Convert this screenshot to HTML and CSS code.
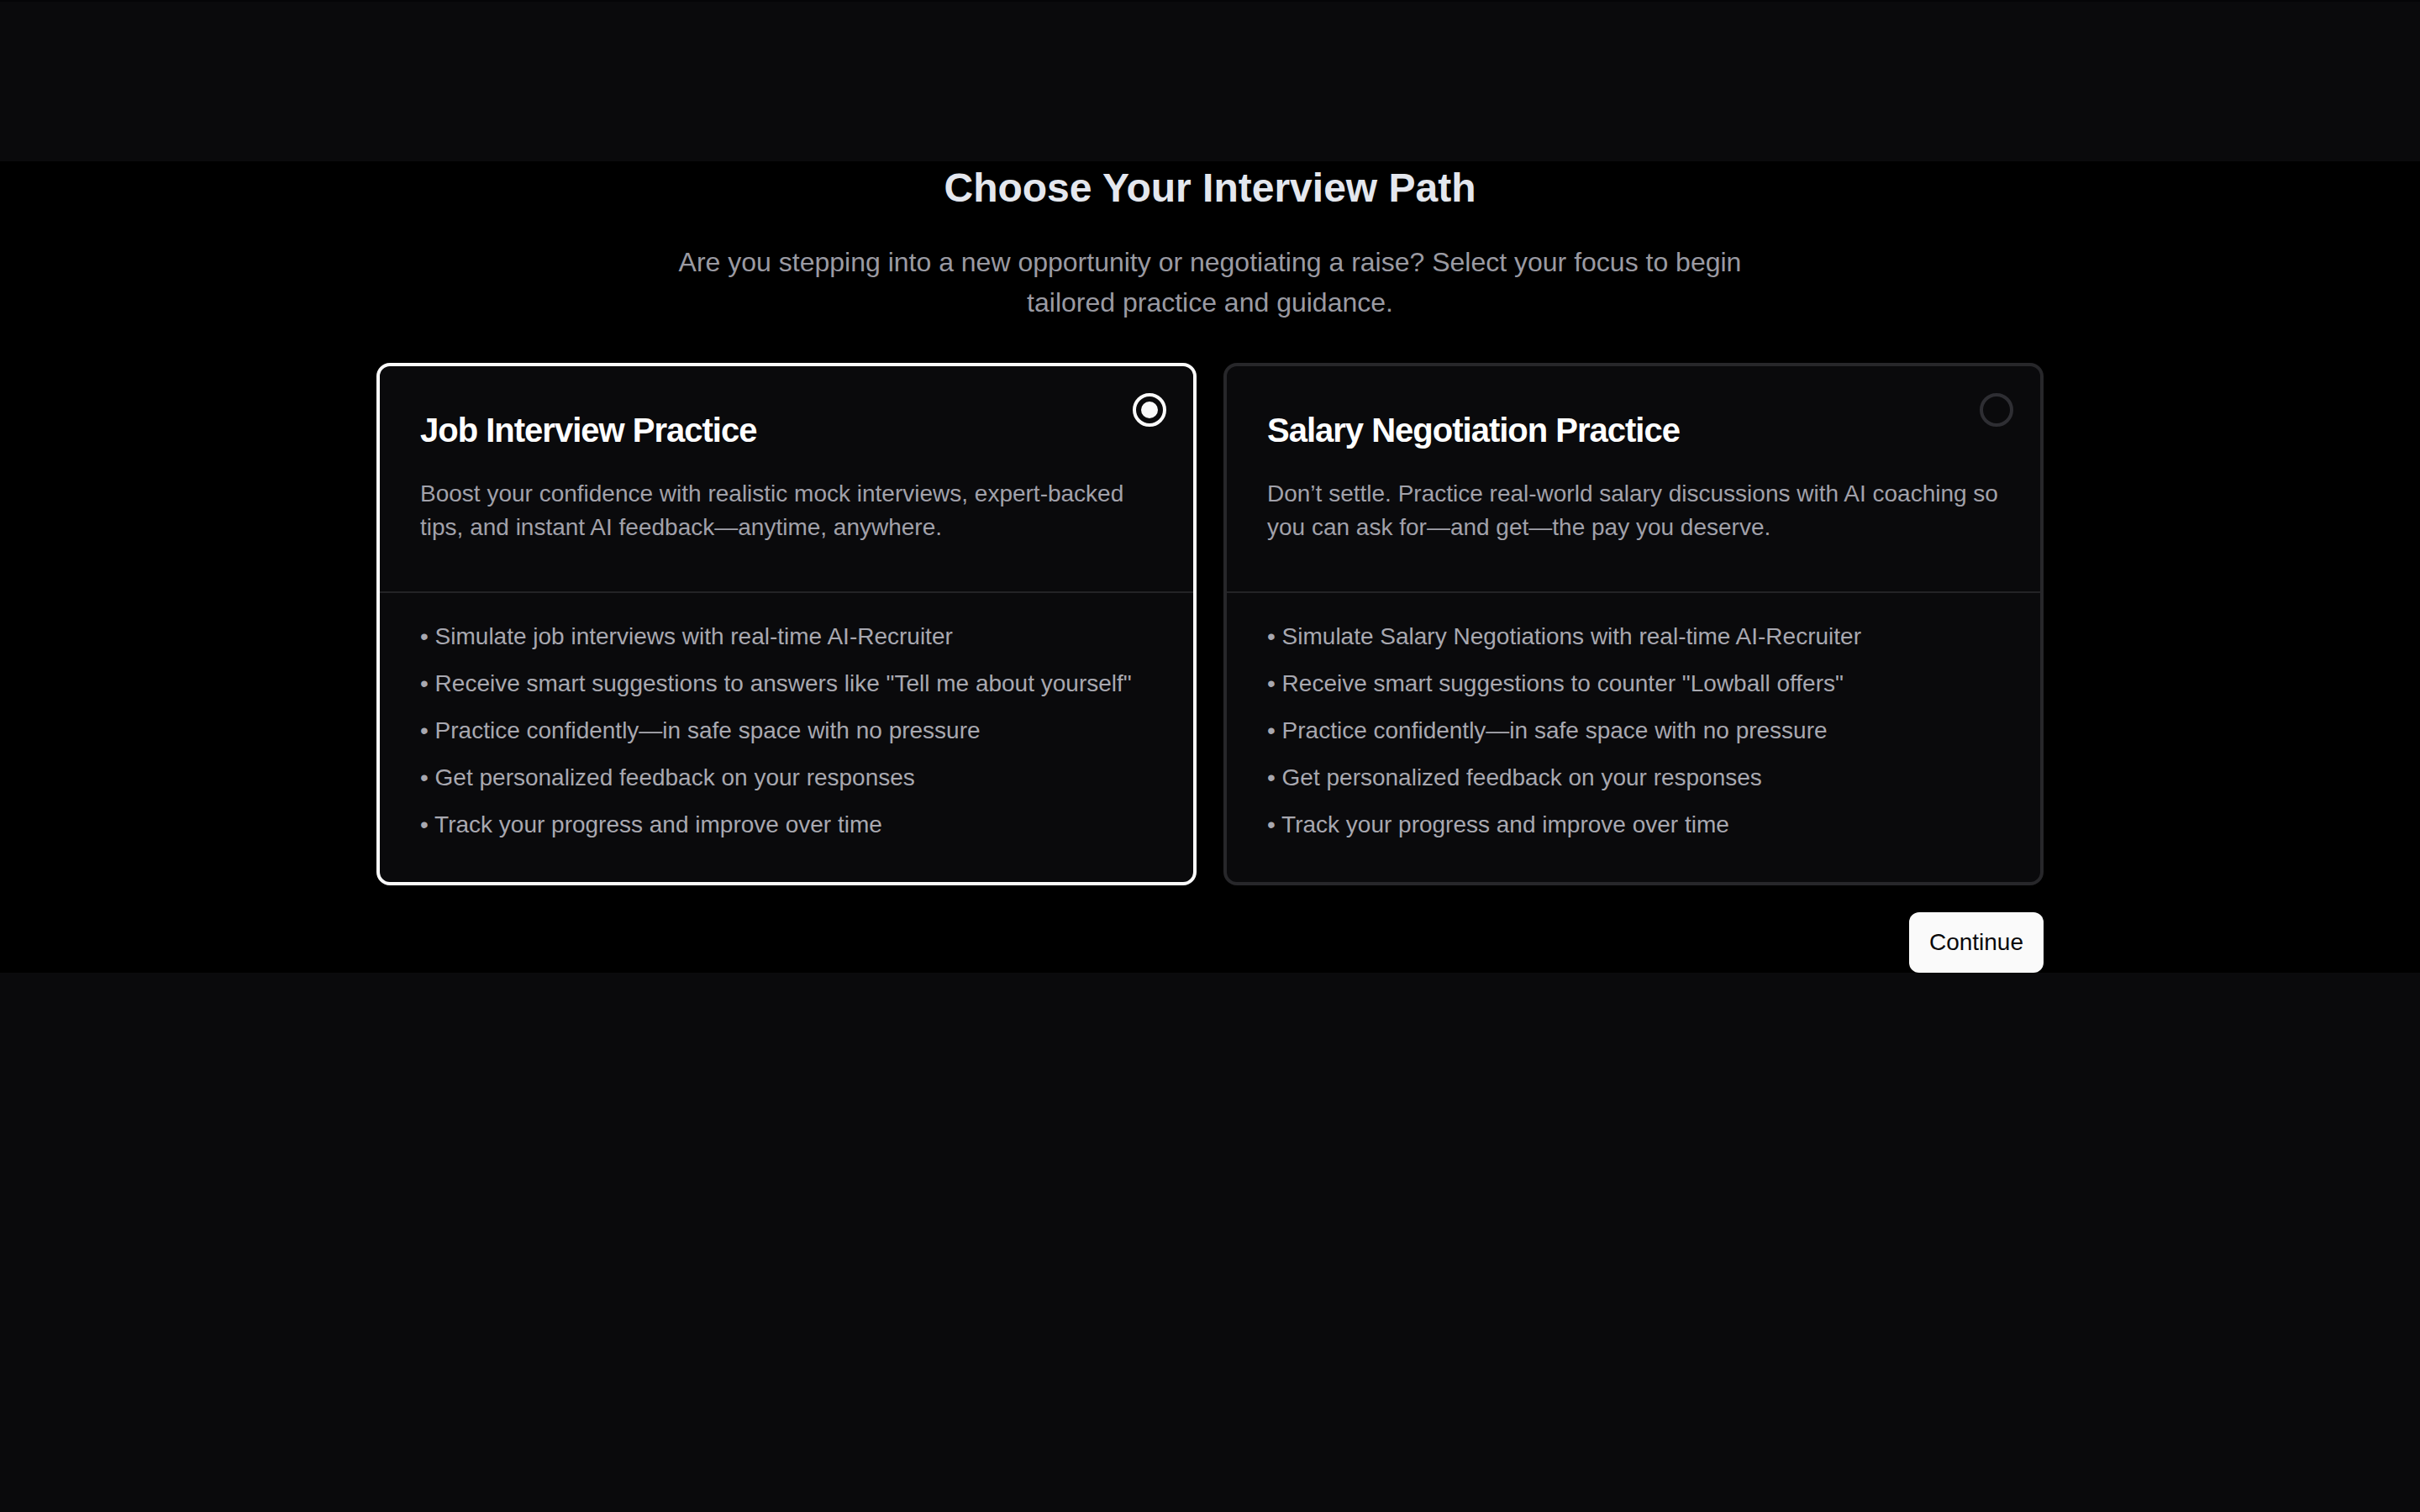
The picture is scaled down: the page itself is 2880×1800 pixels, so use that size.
FILE: index.html
```html
<!doctype html>
<html>
<head>
  <meta charset="utf-8">
  <meta name="viewport" content="width=device-width, initial-scale=1">
  <title>Choose Your Interview Path</title>
  <link rel="stylesheet" href="styles.css">
</head>
<body>

  <div class="topbar"></div>

  <main class="path">
    <h1 class="path-title">Choose Your Interview Path</h1>
    <p class="path-lead">Are you stepping into a new opportunity or negotiating a raise? Select your focus to begin tailored practice and guidance.</p>

    <div class="options">
      <div class="option is-selected">
        <span class="radio"></span>
        <div class="option-head">
          <h2>Job Interview Practice</h2>
          <p>Boost your confidence with realistic mock interviews, expert-backed tips, and instant AI feedback—anytime, anywhere.</p>
        </div>
        <ul class="option-list">
          <li>• Simulate job interviews with real-time AI-Recruiter</li>
          <li>• Receive smart suggestions to answers like "Tell me about yourself"</li>
          <li>• Practice confidently—in safe space with no pressure</li>
          <li>• Get personalized feedback on your responses</li>
          <li>• Track your progress and improve over time</li>
        </ul>
      </div>

      <div class="option">
        <span class="radio"></span>
        <div class="option-head">
          <h2>Salary Negotiation Practice</h2>
          <p>Don’t settle. Practice real-world salary discussions with AI coaching so you can ask for—and get—the pay you deserve.</p>
        </div>
        <ul class="option-list">
          <li>• Simulate Salary Negotiations with real-time AI-Recruiter</li>
          <li>• Receive smart suggestions to counter "Lowball offers"</li>
          <li>• Practice confidently—in safe space with no pressure</li>
          <li>• Get personalized feedback on your responses</li>
          <li>• Track your progress and improve over time</li>
        </ul>
      </div>
    </div>

    <div class="actions">
      <button class="btn-continue">Continue</button>
    </div>
  </main>

</body>
</html>
```

FILE: styles.css
```css
* {
  box-sizing: border-box;
}

html, body {
  margin: 0;
  padding: 0;
}

body {
  min-height: 100vh;
  background: #0a0a0c;
  font-family: "Liberation Sans", Arial, sans-serif;
  color: #fff;
}

.topbar {
  height: 192px;
  border-top: 2px solid #050507;
}

.path {
  background: #000;
  display: flex;
  flex-direction: column;
  align-items: center;
}

.path-title {
  margin: 0;
  font-size: 48px;
  line-height: 64px;
  font-weight: 700;
  color: #e4e7ee;
}

.path-lead {
  margin: 32px 0 0;
  max-width: 1344px;
  font-size: 32px;
  line-height: 48px;
  text-align: center;
  color: #9a9aa2;
}

.options {
  margin-top: 48px;
  width: 1984px;
  display: grid;
  grid-template-columns: 1fr 1fr;
  gap: 32px;
}

.option {
  position: relative;
  background: #0a0a0c;
  border: 4px solid #27272a;
  border-radius: 16px;
  cursor: pointer;
}

.option.is-selected {
  border-color: #fafafa;
}

.radio {
  position: absolute;
  top: 32px;
  right: 32px;
  width: 40px;
  height: 40px;
  border: 4px solid #2e2e33;
  border-radius: 50%;
}

.is-selected .radio {
  border-color: #fafafa;
}

.is-selected .radio:after {
  content: '';
  position: absolute;
  left: 6px;
  top: 6px;
  width: 20px;
  height: 20px;
  border-radius: 50%;
  background: #fafafa;
}

.option-head {
  padding: 48px 48px 56px;
  border-bottom: 2px solid #232326;
}

.option-head h2 {
  margin: 0;
  font-size: 40px;
  line-height: 56px;
  font-weight: 700;
  letter-spacing: -1px;
  color: #fff;
}

.option-head p {
  margin: 28px 0 0;
  font-size: 28px;
  line-height: 40px;
  color: #a1a1aa;
}

.option-list {
  list-style: none;
  margin: 0;
  padding: 32px 48px 48px;
}

.option-list li {
  font-size: 28px;
  line-height: 40px;
  color: #a8a8b0;
}

.option-list li + li {
  margin-top: 16px;
}

.actions {
  width: 1984px;
  margin-top: 32px;
  display: flex;
  justify-content: flex-end;
}

.btn-continue {
  height: 72px;
  padding: 0 24px;
  border: 0;
  border-radius: 12px;
  background: #fafafa;
  color: #09090b;
  font-family: inherit;
  font-size: 28px;
  cursor: pointer;
}
```
